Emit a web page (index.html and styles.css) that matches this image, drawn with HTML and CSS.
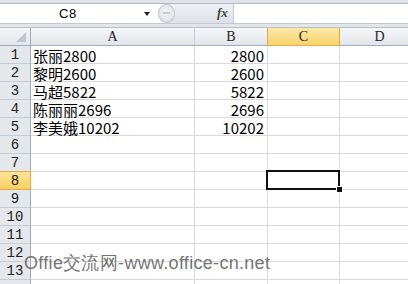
FILE: index.html
```html
<!DOCTYPE html>
<html>
<head>
<meta charset="utf-8">
<link rel="stylesheet" href="styles.css">
</head>
<body>
<div class="app">
  <div class="topband"></div>
  <div class="fbar">
    <div class="namebox">
      <span class="ref">C8</span>
      <span class="arrow"></span>
    </div>
    <div class="fxcap">
      <span class="knob"></span>
      <span class="fx">fx</span>
    </div>
    <div class="finput"></div>
  </div>
  <div class="gapband"></div>
  <div class="sheet">
    <div class="corner"><span class="tri"></span></div>
    <div class="ch">A</div>
    <div class="ch">B</div>
    <div class="ch sel">C</div>
    <div class="ch last">D</div>

    <div class="rh">1</div><div class="c">张丽2800</div><div class="c num">2800</div><div class="c"></div><div class="c"></div>
    <div class="rh">2</div><div class="c">黎明2600</div><div class="c num">2600</div><div class="c"></div><div class="c"></div>
    <div class="rh">3</div><div class="c">马超5822</div><div class="c num">5822</div><div class="c"></div><div class="c"></div>
    <div class="rh">4</div><div class="c">陈丽丽2696</div><div class="c num">2696</div><div class="c"></div><div class="c"></div>
    <div class="rh">5</div><div class="c">李美娥10202</div><div class="c num">10202</div><div class="c"></div><div class="c"></div>
    <div class="rh">6</div><div class="c"></div><div class="c"></div><div class="c"></div><div class="c"></div>
    <div class="rh">7</div><div class="c"></div><div class="c"></div><div class="c"></div><div class="c"></div>
    <div class="rh sel">8</div><div class="c"></div><div class="c"></div><div class="c active"><span class="handle"></span></div><div class="c"></div>
    <div class="rh">9</div><div class="c"></div><div class="c"></div><div class="c"></div><div class="c"></div>
    <div class="rh">10</div><div class="c"></div><div class="c"></div><div class="c"></div><div class="c"></div>
    <div class="rh">11</div><div class="c"></div><div class="c"></div><div class="c"></div><div class="c"></div>
    <div class="rh">12</div><div class="c"></div><div class="c"></div><div class="c"></div><div class="c"></div>
    <div class="rh">13</div><div class="c"></div><div class="c"></div><div class="c"></div><div class="c"></div>
    <div class="rh"></div><div class="c"></div><div class="c"></div><div class="c"></div><div class="c"></div>
  </div>
  <div class="watermark">Offie交流网-www.office-cn.net</div>
</div>
</body>
</html>
```

FILE: styles.css
```css
html, body {
  margin: 0;
  padding: 0;
  background: #ffffff;
}
.app {
  position: relative;
  width: 408px;
  height: 284px;
  overflow: hidden;
  font-family: "Noto Sans CJK SC", sans-serif;
}
.topband {
  height: 3px;
  background: #dfe3e8;
  border-bottom: 1px solid #b4bac3;
}
.fbar {
  display: flex;
  height: 19px;
  border-bottom: 1px solid #c3c9d1;
  background: #ffffff;
}
.namebox {
  width: 158px;
  display: flex;
  align-items: center;
  position: relative;
}
.ref {
  font-family: "Liberation Sans", sans-serif;
  font-size: 13px;
  color: #000;
  margin-left: 59px;
  letter-spacing: 0.5px;
}
.arrow {
  position: absolute;
  left: 144px;
  top: 8px;
  width: 0;
  height: 0;
  border-left: 3.5px solid transparent;
  border-right: 3.5px solid transparent;
  border-top: 4px solid #222;
}
.fxcap {
  width: 75px;
  position: relative;
  background: linear-gradient(#eef0f3, #dde1e6);
  border-radius: 10px 0 0 10px;
  border-right: 1px solid #c3c9d1;
  display: flex;
  align-items: center;
}
.knob {
  position: absolute;
  left: 0;
  top: 0;
  width: 17px;
  height: 19px;
  border-radius: 50%;
  background: radial-gradient(circle at 50% 45%, #f3f4f6 0, #e2e5e9 55%, #c9ced5 100%);
  box-shadow: inset 0 0 0 1px #c4c9d0;
}
.knob::after {
  content: "";
  position: absolute;
  left: 5px;
  top: 8px;
  width: 7px;
  height: 2px;
  background: #c8ccd2;
}
.fx {
  position: absolute;
  left: 59px;
  top: 0;
  font-family: "Liberation Serif", serif;
  font-style: italic;
  font-weight: bold;
  font-size: 13px;
  color: #444;
  line-height: 18px;
}
.finput {
  flex: 1;
  background: #fff;
}
.gapband {
  height: 3px;
  background: #e2e5ea;
  border-bottom: 1px solid #b9bfc7;
}
.sheet {
  display: grid;
  grid-template-columns: 31px 164px 73px 72px 80px;
  grid-auto-rows: 18px;
}
.corner {
  background: linear-gradient(#f4f5f7, #e3e6ea);
  border-right: 1px solid #9eabbb;
  border-bottom: 1px solid #9eabbb;
  position: relative;
  box-sizing: border-box;
}
.tri {
  position: absolute;
  right: 4px;
  bottom: 3px;
  width: 0;
  height: 0;
  border-left: 10px solid transparent;
  border-bottom: 10px solid #c1c6cd;
}
.ch {
  background: linear-gradient(#f5f6f8, #e2e5ea);
  border-right: 1px solid #c6ccd4;
  border-bottom: 1px solid #9eabbb;
  box-sizing: border-box;
  text-align: center;
  font-family: "Liberation Serif", serif;
  font-size: 14px;
  line-height: 18px;
  color: #222;
}
.ch.sel {
  background: linear-gradient(#fbe7a6, #f7d46b);
  border-left: 1px solid #e2aa4a;
  border-right: 1px solid #e2aa4a;
  border-bottom: 1px solid #e2aa4a;
  margin-left: -1px;
}
.rh {
  background: #e4e7eb;
  border-right: 1px solid #9eabbb;
  border-bottom: 1px solid #c6ccd4;
  box-sizing: border-box;
  text-align: center;
  font-family: "Liberation Mono", monospace;
  font-size: 14px;
  line-height: 18px;
  color: #222;
}
.rh.sel {
  background: linear-gradient(#fbe39a, #f6cf5f);
  border-top: 1px solid #e2aa4a;
  border-bottom: 1px solid #e2aa4a;
  border-right: 1px solid #e2aa4a;
  margin-top: -1px;
  height: 19px;
}
.c {
  border-right: 1px solid #d9d9d9;
  border-bottom: 1px solid #d9d9d9;
  box-sizing: border-box;
  font-size: 15px;
  line-height: 17px;
  padding-top: 1px;
  color: #000;
  padding-left: 2px;
  white-space: nowrap;
  overflow: visible;
  position: relative;
}
.c.num {
  text-align: right;
  padding-left: 0;
  padding-right: 3px;
}
.c.active::before {
  content: "";
  position: absolute;
  left: -2px;
  top: -2px;
  right: -1px;
  bottom: -1px;
  border: 2px solid #111;
}
.handle {
  position: absolute;
  right: -4px;
  bottom: -4px;
  width: 5px;
  height: 5px;
  background: #111;
  border: 1px solid #fff;
  z-index: 2;
}
.watermark {
  position: absolute;
  left: 24px;
  top: 252px;
  font-family: "Liberation Sans", sans-serif;
  font-size: 18px;
  line-height: 22px;
  color: rgba(90, 90, 90, 0.85);
  white-space: nowrap;
  letter-spacing: 0.3px;
}
```
